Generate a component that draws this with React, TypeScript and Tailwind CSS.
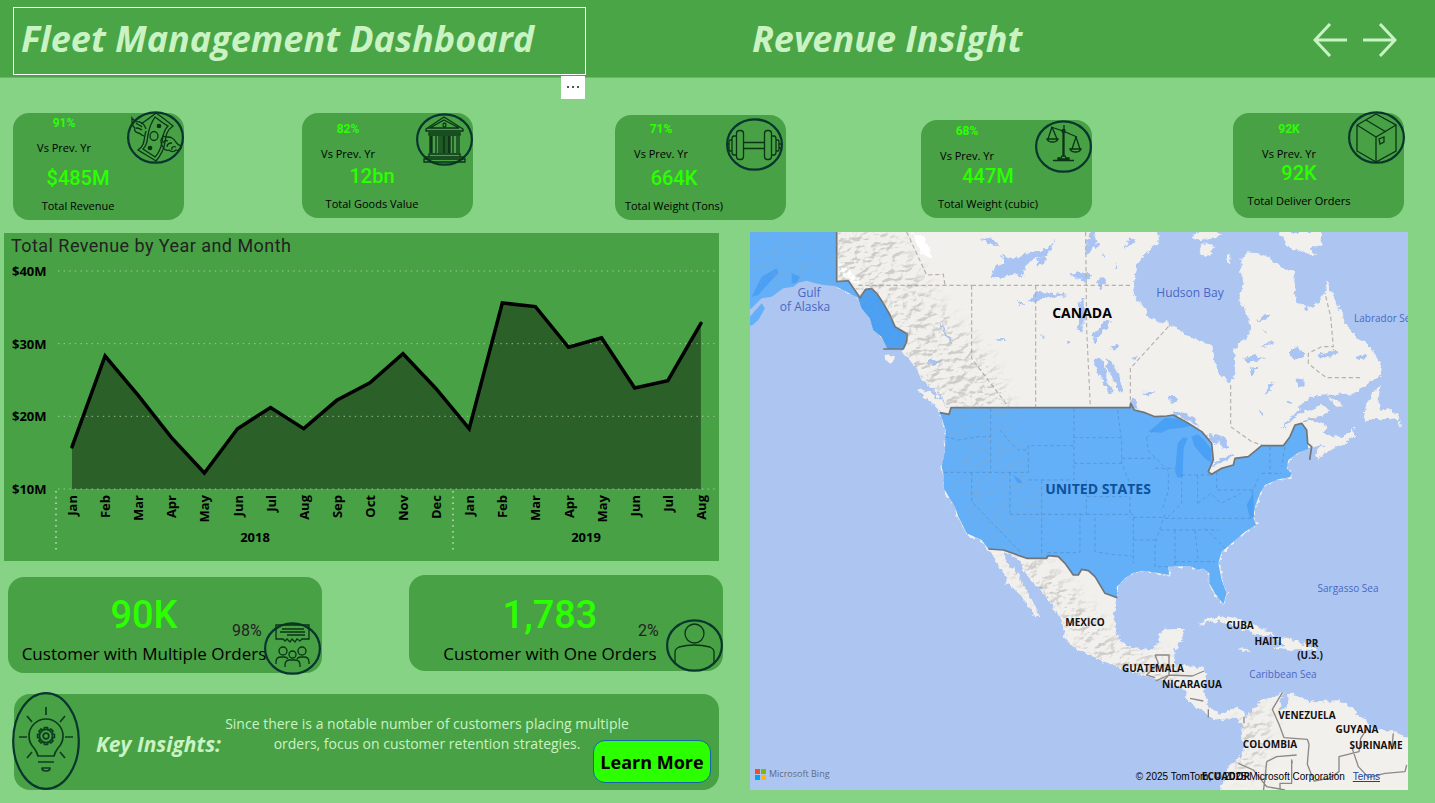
import type { ReactNode } from "react";

/* ---------- icons ---------- */

function MoneyIcon() {
  return (
    <>
      <path d="M14 13C20 9 24 6 29 2c6 4 11 8 17 13-7 5-7 10-8 16-1 8-4 13-9 19C23 46 17 43 11 39c6-4 6-9 7-15 0-2 1-3 1-4" />
      <path d="M28 6c4 3 9 7 13 9-5 5-5 10-6 16-1 6-3 11-7 15-4-3-8-5-12-8 5-5 4-9 5-14 1-7 3-12 7-18z" />
      <ellipse cx="27" cy="25" rx="4" ry="4.500" />
      <circle cx="32" cy="15" r="1.700" fill="#0a3316" />
      <circle cx="23" cy="37" r="1.700" fill="#0a3316" />
      <path d="M17 25c-3-1-4-3-6-3-3-1-4-3-3-5-3-2-3-5-3-10 2 3 5 4 8 4 3 1 5 4 6 7M9 12c2 2 4 2 6 4M9 17c3 0 4 1 6 2" />
      <path d="M36 25c3 2 6 0 9 2 4 2 4 7 9 8 1 3-2 5-5 4-2 2-5 2-7 0-3 1-5-1-6-3-2-2-2-5-2-7zM40 36c0-3 2-4 5-4M45 39c-1-3 1-4 4-3M36 32c1-2 3-3 5-2" />
    </>
  );
}

function BankIcon() {
  return (
    <>
      <path d="M10 16 28 4l19 12v2H10zM14 15 28 7l15 8zM13 20h31v2H13zM13 41h31v3H13zM10 44h37v2H10zM8 46h41v3H8z" />
      <ellipse cx="28.500" cy="12" rx="1.500" ry="2" />
      <path d="M14 23v17M16 23v17M20 23v17M23 23v17M25 23v17M27 23v17M30 23v17M32 23v17M34 23v17M37 23v17M41 23v17M43 23v17" />
      <path d="M15 23v17M28 23v17M33 23v17" strokeWidth="1.800" />
    </>
  );
}

function DumbbellIcon() {
  return (
    <>
      <rect x="10.500" y="12.500" width="7" height="29" rx="3" />
      <rect x="38.500" y="12.500" width="7" height="29" rx="3" />
      <path d="M17 24.500h22M17 30.500h22M10 18H8q-2 0-2 3v13q0 3 2 3h2M46 18h2q2 0 2 3v13q0 3-2 3h-2M6 22H4q-1 0-1 2v7q0 2 1 2h2M50 22h2q1 0 1 2v7q0 2-1 2h-2M3 26H1M3 30H1M53 26h2M53 30h2" />
    </>
  );
}

function ScaleIcon() {
  return (
    <>
      <path d="M29 5v31M28 11v25M16 7l12 4 14 6M23 39h11v-1h-3l-1-2h-3l-1 2h-3zM18 40.500h21" />
      <circle cx="28.500" cy="11" r="1.500" />
      <path d="M17 7l-4 12M17 7l5 12M12 19h11q-1 3-5.500 3T12 19zM41 17l-4 12M41 17l4 12M35 29h11q-1 3-5.500 3T35 29z" />
    </>
  );
}

function BoxIcon() {
  return (
    <>
      <path d="M28 3 9 14v26l19 11 20-11V14zM9 14l19 12 20-12M28 26v25M18 9l20 12" />
      <path d="M31 28l5-2v5l-4 2z" />
    </>
  );
}

function GroupIcon() {
  return (
    <>
      <path d="M12 3h33v14h-7l-2 2-3-2-2 3-3-3-2 3-3-3-2 2-2-2h-7zM18 7h22M16 10h25M23 13h18" />
      <circle cx="19" cy="29" r="4" />
      <circle cx="38" cy="29" r="4" />
      <circle cx="28.500" cy="32.500" r="3.500" />
      <path d="M12 42v-2q0-5 5-5h3q3 0 4 2M45 42v-2q0-5-5-5h-3q-3 0-4 2M21 45v-2q0-5 5-5h5q5 0 5 5v2" />
    </>
  );
}

function PersonIcon() {
  return (
    <>
      <circle cx="28.500" cy="14.500" r="9.500" />
      <path d="M9 44V33q0-3 4-5 15-4 31 0 4 2 4 5v11" />
    </>
  );
}

function RoundIcon({ children, className }: { children: ReactNode; className: string }) {
  return (
    <svg viewBox="0 0 57 53" className={"absolute h-[53px] w-[57px] " + className} fill="none" stroke="#0a3316" strokeWidth="1.300" aria-hidden="true">
      <ellipse cx="28.500" cy="26.500" rx="27.400" ry="25.200" stroke="#08362f" strokeWidth="2.200" />
      {children}
    </svg>
  );
}

function BulbIcon() {
  const teeth = Array.from({ length: 8 }, (_, i) => i * 45);
  return (
    <svg viewBox="0 0 68 98" className="absolute -top-0.5 -left-0.5 h-[98px] w-[68px]" fill="none" stroke="#0d3d20" strokeWidth="1.700" aria-hidden="true">
      <ellipse cx="34" cy="49" rx="32.800" ry="47.800" stroke="#08362f" strokeWidth="2.200" />
      <path d="M26 64q-1-4-4-8-5-5-5-12a17 17 0 0 1 34 0q0 7-5 12-3 4-4 8zM26 70h16M30 76h8q0 3-4 3t-4-3z" strokeLinejoin="round" />
      <path d="M34 15v8M15 24l5 6M53 24l-5 6M7 45h8M53 45h8M20 60l-5 6M48 60l5 6" />
      <circle cx="34" cy="44" r="2.800" />
      <circle cx="34" cy="44" r="6.500" />
      {teeth.map((a) => (
        <path key={a} d="M32 37.500l.5-1.900h3l.5 1.900" transform={`rotate(${a} 34 44)`} />
      ))}
    </svg>
  );
}

/* ---------- KPI cards ---------- */

type Kpi = {
  label: string;
  trend: string;
  value: string;
  card: string;
  trendBox: string;
  valueBox: string;
  iconPlace: string;
  icon: ReactNode;
};

const kpis: Kpi[] = [
  { label: "Total Revenue", trend: "91%", value: "$485M", card: "h-[107px] pt-0.5", trendBox: "w-[102px]", valueBox: "mt-3 w-[130px]", iconPlace: "-top-0.5 right-0", icon: <MoneyIcon /> },
  { label: "Total Goods Value", trend: "82%", value: "12bn", card: "h-[105px] pt-2", trendBox: "w-[92px]", valueBox: "mt-1 w-[140px]", iconPlace: "top-0 right-0", icon: <BankIcon /> },
  { label: "Total Weight (Tons)", trend: "71%", value: "664K", card: "mt-0.5 h-[105px] pt-1.5", trendBox: "w-[92px]", valueBox: "mt-1.5 w-[118px]", iconPlace: "top-[3px] right-[3px]", icon: <DumbbellIcon /> },
  { label: "Total Weight (cubic)", trend: "68%", value: "447M", card: "mt-[7px] h-[98px] pt-[3px]", trendBox: "w-[92px]", valueBox: "mt-0.5 w-[134px]", iconPlace: "top-0 right-0", icon: <ScaleIcon /> },
  { label: "Total Deliver Orders", trend: "92K", value: "92K", card: "h-[105px] pt-2", trendBox: "w-[112px]", valueBox: "mt-px w-[132px]", iconPlace: "-top-0.5 -right-px", icon: <BoxIcon /> },
];

function KpiCard({ kpi }: { kpi: Kpi }) {
  return (
    <article className={"relative flex w-[171px] flex-col rounded-2xl bg-[#48a145] text-center text-[11px] whitespace-nowrap " + kpi.card}>
      <div className={kpi.trendBox}>
        <p className="font-['Roboto'] text-xs leading-4 font-bold text-[#2bff00]">{kpi.trend}</p>
        <p className="mt-[9px] leading-4 text-black">Vs Prev. Yr</p>
      </div>
      <div className={kpi.valueBox}>
        <p className="font-['Roboto'] text-xl leading-5 font-medium text-[#2bff00]">{kpi.value}</p>
        <p className="mt-2.5 flex justify-center leading-4 text-black">{kpi.label}</p>
      </div>
      <RoundIcon className={kpi.iconPlace}>{kpi.icon}</RoundIcon>
    </article>
  );
}

/* ---------- revenue chart ---------- */

const months = ["Jan", "Feb", "Mar", "Apr", "May", "Jun", "Jul", "Aug", "Sep", "Oct", "Nov", "Dec"];
const revenue = [15.8, 28.3, 22.9, 17.1, 12.2, 18.3, 21.2, 18.3, 22.2, 24.6, 28.6, 23.8, 18.3, 35.6, 35.1, 29.5, 30.8, 23.9, 24.9, 32.8];
const ticks = [40, 30, 20, 10];
const px = (i: number) => 68 + i * 33.1;
const py = (v: number) => 230 - (v - 10) * 7.267;

function RevenueChart() {
  const line = revenue.map((v, i) => `${px(i).toFixed(1)},${py(v).toFixed(1)}`).join(" ");
  return (
    <svg viewBox="0 0 715 302" className="block h-auto w-full font-['Open_Sans'] text-[13px] font-bold" role="img" aria-label="Total revenue by year and month">
      <polygon points={`68,230 ${line} ${px(19)},230`} fill="#2b6129" />
      {ticks.map((t) => (
        <g key={t}>
          <line x1="54" x2="711" y1={py(t)} y2={py(t)} stroke="#c9dcc5" strokeOpacity="0.7" strokeDasharray="1.400 4.200" />
          <text x="8" y={py(t) + 5}>{`$${t}M`}</text>
        </g>
      ))}
      <polyline points={line} fill="none" stroke="#000" strokeWidth="3.500" strokeLinecap="round" strokeLinejoin="miter" />
      {revenue.map((_, i) => (
        <text key={i} textAnchor="end" transform={`translate(${px(i) + 5} 236) rotate(-90)`}>
          {months[i % 12]}
        </text>
      ))}
      <path d="M52 232v60M449 232v60" stroke="#c9dcc5" strokeWidth="1.500" strokeDasharray="1.500 4.200" />
      <text x="251" y="283" textAnchor="middle">2018</text>
      <text x="582" y="283" textAnchor="middle">2019</text>
    </svg>
  );
}

/* ---------- map ---------- */

const LAND =
  "M275 0H1238L1240 30 1215 60 1190 80 1175 100 1170 150 1163 190 1175 210 1195 230 1210 265 1240 275 1270 280 1300 300 1340 325 1400 345 1405 370 1408 400 1420 425 1440 455 1455 468 1468 440 1475 400 1465 360 1500 330 1517 300 1515 270 1495 225 1480 210 1495 180 1490 120 1488 85 1510 68 1560 75 1595 100 1620 120 1645 130 1650 185 1655 215 1685 240 1720 220 1738 190 1745 155 1760 190 1780 230 1800 280 1830 320 1872 345 1888 380 1908 405 1908 435 1885 450 1850 475 1820 493 1730 492 1695 500 1670 520 1650 550 1625 575 1600 600 1620 592 1655 560 1690 540 1730 525 1747 540 1735 555 1690 565 1680 575 1720 575 1742 585 1735 605 1760 620 1790 622 1825 596 1830 615 1800 640 1760 655 1720 685 1715 670 1740 642 1700 650 1690 655 1660 668 1630 690 1625 715 1640 735 1635 745 1600 748 1560 765 1545 790 1530 830 1525 860 1533 885 1500 905 1465 935 1430 965 1420 1000 1430 1050 1445 1090 1435 1123 1410 1090 1393 1060 1393 1030 1375 1015 1360 1020 1335 1008 1270 1010 1272 1035 1235 1028 1195 1022 1165 1028 1140 1045 1115 1070 1113 1100 1106 1150 1108 1190 1118 1225 1145 1250 1180 1260 1220 1255 1240 1240 1248 1210 1262 1200 1318 1198 1305 1240 1290 1258 1288 1300 1300 1305 1340 1308 1368 1315 1386 1330 1376 1365 1378 1400 1390 1430 1402 1445 1430 1452 1460 1438 1490 1438 1500 1460 1502 1475 1515 1450 1535 1430 1550 1410 1590 1402 1612 1385 1617 1390 1605 1415 1602 1440 1622 1440 1630 1400 1645 1395 1675 1412 1715 1418 1790 1415 1815 1430 1845 1460 1880 1490 1920 1505 1960 1510 1995 1530V1700H1430L1430 1665 1445 1640 1450 1610 1480 1590 1500 1560 1495 1510 1490 1480 1475 1462 1455 1462 1430 1472 1390 1458 1365 1438 1338 1422 1328 1405 1328 1385 1280 1358 1220 1342 1150 1320 1090 1300 1040 1275 980 1245 958 1222 962 1200 945 1160 920 1120 880 1070 850 1040 820 990 805 975 778 968 780 990 800 1015 818 1030 842 1080 858 1110 875 1135 880 1158 868 1152 850 1130 832 1100 800 1068 780 1058 790 1050 775 1030 750 985 730 957 710 930 665 910 650 880 640 860 630 830 605 790 595 770 597 740 590 710 600 660 602 600 588 550 615 535 600 520 560 472 530 452 520 420 495 390 475 357 415 330 340 205 275 170Z";

const COAST_ISLANDS =
  "M520 478l30 5 30 22 32 30-2 16-28-10-30-28-32-28zM422 375l28-4-2 20-10 12-14-12zM1360 55l25-15 25 8-14 20-24 12zM1445 75l12-4-2 28-10-2zM1340 15l40-10 55 5-30 15-40 8zM1600 6h130l-5 40-30 8 18 24-30-5-50-22zM1908 465l-25 20-30 65 10 20 100-5-5 20 12 12-10-40-25-20-25 5-10-20 2-30zM1745 505l40 10 10 15-15-2zM1360 1185l30-22 50-5 55 12 65 30 30 18-45-3-65-22-55-18-45 5zM1590 1225l50 2 60 25 10 12-45-3-85-5 42-8zM1478 1255l32 2 12 8-32-2zM1680 1255l28-1 2 9-28-1z";

const USA =
  "M585 548L612 553 618 533H1155L1157 520 1168 540 1200 548 1230 560 1265 558 1285 555 1330 580 1370 605 1400 640 1405 690 1390 725 1400 733 1430 715 1465 705 1470 685 1510 680 1550 647H1615L1635 620 1650 585 1670 580 1685 600 1688 640 1690 656 1660 668 1630 690 1625 715 1640 730 1635 742 1600 748 1560 765 1545 790 1530 830 1525 860 1533 885 1500 905 1465 935 1430 965 1420 1000 1430 1050 1445 1090 1435 1123 1410 1090 1393 1060 1393 1030 1375 1015 1360 1020 1335 1008 1270 1010 1272 1035 1235 1028 1195 1022 1165 1028 1140 1045 1115 1070 1117 1103 1080 1090 1050 1040 1030 1022 1010 1018 1000 1035 985 1035 960 1000 940 980 910 977 905 985H845L775 960 730 957 710 930 665 910 650 880 640 860 630 830 605 790 595 770 597 740 590 710 600 660 602 600Z";

const ALASKA =
  "M10 0H275V155L310 152 345 203 362 178 380 176 395 190 415 220 435 255 450 290 487 312 485 335 475 357H428L410 320 385 300 375 265 350 235 340 205 305 185 270 168 235 165 205 158 185 152 160 158 145 170 115 175 80 200 50 205 20 235 10 240ZM10 265L50 220 60 235 40 270 20 287 10 285Z";

const LAKES =
  "M740 120l35-22-8-22 30 10 20-5 35-15 45-5 25-20 10-20-12 35-25 22-32 12-30 30 2 20-20-8-40 8-30 2zM705 25l40 5 20 20-30-8zM875 90l25-12 8 15-30 15zM850 215l25-30 60 5 35 5-45 8-40 2-22 14zM820 215l15 5-10 8zM975 135l30-10 40 8-20 20-25-5zM1025 30l15-12 8 20-15 35-12-12zM1000 215l15-10 5 60-10 40-12-5 8-40zM750 328l20-4 18 6-20 4zM585 280l12 15 25 45-8-3-22-35zM885 310l15 8-3 10zM962 335l14 2-8 8zM1045 330l8-5v18l-6-3zM1030 15l15-9 15 40-8 12zM1070 70l12 5-6 8zM1140 50l15-25 18 8-22 10-8 20zM1110 100l10 8-5 10zM1055 155l20-18 8 10-20 32zM1042 320l35-45 20-5-12 25-35 32zM1095 350l20-10 10 10-18 12zM1155 385l18-5 4 12-18-2zM1045 390l20-5 15 15 5 45 20 45-12 2-25-50-12-20zM1085 385l18 10 18 35 15 55-16-2-15-40-18-20zM1190 485l40 2-20 12zM1272 500l12-8 10 15-10 15-10-6zM1157 505l20 10 5 15-20 8zM1530 275l25-18 20-5-15 20-25 6zM1495 385l25-8 45 8-35 6-25 8zM1545 350l40-16 5 8-32 8zM1515 418l20-5-5 18-12 4zM1640 350l25 8 10 15-10 15-22-5-10-15zM1725 370l45-10 8 12-38 12-20-4zM1655 450l15-8 10 22-18 12zM1565 485l8-20 15-10-15 30-8 10zM1830 385l30-15 8 8-30 16zM1540 545l15-3-2 14zM1625 512l20 4-18 6zM1280 545l30-2 45 25 10 25-30-18-40-18zM1385 612l45 5 25 40-20 0-12-25-10 12-18-15zM1375 605l20 35 12 50-2 15-12-20-2-40zM1405 700l55-30 10 2-30 22-35 10zM1550 300l15 12-8 2zM540 398l25-12 22 6-25 14z";

const US_LAKES =
  "M1210 605l25-20 25-22 40 3 40 22-30 5-40 5-20 10zM1298 640l15-18 15 2-12 30-3 85-15 5-8-20zM1340 620l18-8 20 18 20 28 2 40-22-14-30-36z";

const PROVINCES =
  "M340 166H680M680 166V385L790 530M680 166H1163M872 166V530M1022 6L1025 300 1036 530M1270 290L1156 415V520M1457 465V590L1520 635 1550 645M1845 443H1745L1720 425 1690 400 1690 370 1730 350 1765 350 1757 260 1740 190M485 6L545 135 595 133 600 166M1675 575l35-10";

const STATES =
  "M737 535V727M600 620l40 10 60-10H737M597 727H850V647H985M765 600l25 30 30 30h30M987 535V750M850 750H987M680 727V815L830 970M795 727V850M795 853H1025M890 750V980M1024 750V853M987 700H1130M985 623H1125M1025 800H1145M1118 540l12 100v60l25 60v100M1130 685H1230M1025 853H1165M1165 862H1260M1165 862V1000M1050 863V965l50 8 60 5M1165 930H1240M1260 853L1230 940v70H1270M1205 623l25-25M1205 623l5 40 60 60v60l-20 60M1230 715H1290M1310 735v85l-40 40M1358 735V820M1310 735H1400M1415 725v55H1530M1358 820l40-30 30 30 60-30M1260 865H1520M1245 900H1420M1290 900V1005M1350 900l10 95M1290 995H1410M1380 895l60 60M1575 650v80M1620 650l-10 60M1550 730h60M905 985V968H1005V850M1540 745l-20 45";

const NATIONS =
  "M1230 1275h42v60l-15 15M1230 1275l10 25-35 35 25 8M1272 1335l70 3 35-15M1272 1335l-40 18M1335 1405l40 8M1390 1438v25M1497 1460v20M1612 1388l-30 50 20 45 15 40 70 5 5 15-5 60 20 50 45-8 30-20V1580l60-15 5-40 20-30M1820 1550l20 60 30 32 50-12 60-5 5-20M1945 1510l-5 50M1480 1600l45 20 40 50 55 10M1565 1595l-5 50-5 40M1565 1595l30-15 60-5M1642 1600l-2-10v70h-35v25";

const COUNTRY = "text-[10px] font-bold fill-[#111111]";
const SEA = "text-[10px] fill-[#4a66c4]";

const MAP_TEXT: { t: string; x: number; y: number; c: string }[] = [
  { t: "Gulf", x: 809, y: 297, c: "text-xs fill-[#4a66c4]" },
  { t: "of Alaska", x: 805, y: 311, c: "text-xs fill-[#4a66c4]" },
  { t: "Hudson Bay", x: 1190, y: 297, c: "text-xs fill-[#4a66c4]" },
  { t: "Sargasso Sea", x: 1348, y: 592, c: SEA },
  { t: "Caribbean Sea", x: 1283, y: 678, c: SEA },
  { t: "CANADA", x: 1082, y: 318, c: "text-sm font-bold fill-black" },
  { t: "UNITED STATES", x: 1098, y: 494, c: "text-sm font-bold fill-[#0d529b]" },
  { t: "MEXICO", x: 1085, y: 626, c: COUNTRY },
  { t: "CUBA", x: 1240, y: 629, c: COUNTRY },
  { t: "HAITI", x: 1268, y: 645, c: COUNTRY },
  { t: "PR", x: 1312, y: 647, c: COUNTRY },
  { t: "(U.S.)", x: 1310, y: 659, c: COUNTRY },
  { t: "GUATEMALA", x: 1153, y: 672, c: COUNTRY },
  { t: "NICARAGUA", x: 1192, y: 688, c: COUNTRY },
  { t: "VENEZUELA", x: 1307, y: 719, c: COUNTRY },
  { t: "GUYANA", x: 1357, y: 733, c: COUNTRY },
  { t: "COLOMBIA", x: 1270, y: 748, c: COUNTRY },
  { t: "SURINAME", x: 1376, y: 749, c: COUNTRY },
  { t: "ECUADOR", x: 1226, y: 780, c: COUNTRY },
];

function RevenueMap() {
  return (
    <svg viewBox="750 232 658 558" className="block h-auto w-full bg-[#adc6f1] font-['Open_Sans']" role="img" aria-label="Revenue by country">
      <defs>
        <filter id="coast" filterUnits="userSpaceOnUse" x="0" y="0" width="2000" height="1700">
          <feTurbulence type="fractalNoise" baseFrequency="0.06" numOctaves="3" seed="4" result="n" />
          <feDisplacementMap in="SourceGraphic" in2="n" scale="22" xChannelSelector="R" yChannelSelector="G" />
        </filter>
        <filter id="relief" filterUnits="userSpaceOnUse" x="750" y="232" width="658" height="558">
          <feTurbulence type="fractalNoise" baseFrequency="0.09 0.15" numOctaves="4" seed="9" />
          <feColorMatrix values="0 0 0 0 0  0 0 0 0 0  0 0 0 0 0  1 0 0 0 0" />
          <feDiffuseLighting surfaceScale="5" lightingColor="#ffffff">
            <feDistantLight azimuth="225" elevation="55" />
          </feDiffuseLighting>
          <feColorMatrix values="0 0 0 0 0.35  0 0 0 0 0.35  0 0 0 0 0.33  -2.2 0 0 0 1.7" />
        </filter>
        <filter id="soft">
          <feGaussianBlur stdDeviation="22" />
        </filter>
        <clipPath id="landClip">
          <path d={LAND} transform="translate(745 230) scale(.33333)" />
          <path d={ALASKA} transform="translate(745 230) scale(.33333)" />
        </clipPath>
        <mask id="mountains" maskUnits="userSpaceOnUse" x="750" y="232" width="658" height="558">
          <g transform="translate(745 230) scale(.33333)">
            <g fill="none" stroke="#fff" filter="url(#soft)" strokeLinejoin="round">
              <path d="M0 60L360 60 480 270 640 440 720 620 760 800 860 900" strokeWidth="220" />
              <path d="M820 980L960 1120 1080 1270 1300 1340M1540 1440L1490 1640" strokeWidth="100" />
            </g>
            <path d={USA} fill="#000" fillOpacity="0.65" />
            <path d={ALASKA} fill="#000" fillOpacity="0.65" />
          </g>
        </mask>
      </defs>

      <g transform="translate(745 230) scale(.33333)">
        <g filter="url(#coast)">
          <path d={LAND} fill="#f2f0ed" stroke="#f2f0ed" strokeWidth="3" />
          <path d={COAST_ISLANDS} fill="#f2f0ed" />
          <path d={LAKES} fill="#a9c4f2" />
          <path d="M280 100l30 10 35 45-20 5-40-25zM500 10l40 10 20 60-25 0z" fill="#fff" />
        </g>
        <path d={ALASKA} fill="#64b0f8" />
        <path d="M20 200l30-60 45-25 5 15-25 25-35 40zM140 130l25 10-10 20-15 0zM340 205l22-27 18-2 35 44 35 70 37 22-2 23-10 22h-47l-18-37-25-20-10-35-25-30z" fill="#4aa0f4" />
        <path d={USA} fill="#64b0f8" />
        <path d={US_LAKES} fill="#4aa0f4" />
        <path d="M1525 785l-20 40 10 40 12-5zM805 735l22 15 5 10-15-2z" fill="#4aa0f4" />
        <path d={PROVINCES} fill="none" stroke="#b5b1ab" strokeWidth="3.500" strokeDasharray="13 8" />
        <path d={STATES} fill="none" stroke="#4d8cc6" strokeWidth="3" strokeDasharray="11 8" strokeOpacity="0.65" />
        <path d={NATIONS} fill="none" stroke="#8b8885" strokeWidth="4" strokeLinejoin="round" />
        <path
          d="M275 0V155L310 152 345 203 362 178 380 176 395 190 415 220 435 255 450 290 487 312 485 335 475 357H415M585 548L612 553 618 533H1155L1157 520 1168 540 1200 548 1230 560 1265 558 1285 555 1330 580 1370 605 1400 640 1405 690 1390 725 1400 733 1430 715 1465 705 1470 685 1510 680 1550 647H1615L1635 620 1650 585 1670 580 1685 600 1688 640 1700 650 1694 690M1117 1103L1080 1090 1050 1040 1030 1022 1010 1018 1000 1035 985 1035 960 1000 940 980 910 977 905 985H845L775 960 730 957"
          fill="none"
          stroke="#6f7478"
          strokeWidth="5"
          strokeLinejoin="round"
        />
      </g>

      <g clipPath="url(#landClip)">
        <g mask="url(#mountains)">
          <rect x="750" y="232" width="658" height="558" filter="url(#relief)" opacity="0.45" />
        </g>
      </g>

      {MAP_TEXT.map((m) => (
        <text key={m.t} x={m.x} y={m.y} textAnchor="middle" className={m.c}>
          {m.t}
        </text>
      ))}
      <text x="1354" y="322" className={SEA}>
        Labrador Sea
      </text>
    </svg>
  );
}

function MapPanel() {
  return (
    <section className="relative min-w-0 flex-[658] self-start overflow-hidden" aria-label="Revenue map">
      <RevenueMap />
      <div className="absolute bottom-2.5 left-[5px] flex items-center gap-[3px]">
        <svg viewBox="0 0 11 11" className="h-[11px] w-[11px]" aria-hidden="true">
          <path fill="#f25022" d="M0 0h5v5H0z" />
          <path fill="#7fba00" d="M6 0h5v5H6z" />
          <path fill="#00a4ef" d="M0 6h5v5H0z" />
          <path fill="#ffb900" d="M6 6h5v5H6z" />
        </svg>
        <span className="font-['Open_Sans'] text-[9px] leading-3 text-[#5f6b80]">Microsoft Bing</span>
      </div>
      <div className="absolute right-7 bottom-[5px] flex gap-2 font-['Liberation_Sans'] text-[10px] leading-4 whitespace-nowrap text-black">
        <span>© 2025 TomTom, © 2025 Microsoft Corporation</span>
        <a href="#terms" className="text-[#1b3fa0] underline">
          Terms
        </a>
      </div>
    </section>
  );
}

/* ---------- customer cards ---------- */

type CustomerCardProps = {
  value: string;
  share: string;
  label: string;
  body: string;
  cardClass: string;
  shareClass: string;
  children: ReactNode;
};

function CustomerCard({ value, share, label, body, cardClass, shareClass, children }: CustomerCardProps) {
  return (
    <article className={"relative h-24 w-[314px] rounded-2xl bg-[#48a145] " + cardClass}>
      <div className={"flex flex-col items-center whitespace-nowrap " + body}>
        <p className="font-['Roboto'] text-[38px] leading-10 font-medium text-[#2bff00]">{value}</p>
        <p className="mt-[7px] text-[17px] leading-6 text-black">{label}</p>
      </div>
      <p className={"absolute font-['Roboto'] text-base leading-5 text-[#222222] " + shareClass}>{share}</p>
      {children}
    </article>
  );
}

/* ---------- page ---------- */

export default function App() {
  return (
    <div className="flex min-h-screen flex-col bg-[#87d385] font-['Open_Sans',sans-serif]">
      <header className="flex h-[78px] items-center border-b border-[#68b965] bg-[#4aa546] pt-1 text-[#caf3c3]">
        <div className="w-[52.400%] pl-[13px]">
          <div className="relative flex h-[68px] w-[573px] items-center border border-white pb-1 pl-[7px]">
            <h1 className="text-4xl leading-10 font-bold whitespace-nowrap italic">Fleet Management Dashboard</h1>
            <button type="button" aria-label="More options" className="absolute top-[68px] right-0 flex h-[23px] w-6 items-center justify-center gap-[3px] bg-white">
              <span className="size-0.5 bg-[#555555]" />
              <span className="size-0.5 bg-[#555555]" />
              <span className="size-0.5 bg-[#555555]" />
            </button>
          </div>
        </div>
        <h2 className="pb-1 text-4xl leading-10 font-bold whitespace-nowrap italic">Revenue Insight</h2>
        <nav className="mr-[38px] ml-auto flex gap-4 pb-0.5" aria-label="Pages">
          <button type="button" aria-label="Previous page">
            <svg viewBox="0 0 34 34" className="size-[34px]" fill="none" stroke="currentColor" strokeWidth="3">
              <path d="M34 17H2M17 1 2 17l15 16" />
            </svg>
          </button>
          <button type="button" aria-label="Next page">
            <svg viewBox="0 0 34 34" className="size-[34px]" fill="none" stroke="currentColor" strokeWidth="3">
              <path d="M0 17h32M17 1l15 16-15 16" />
            </svg>
          </button>
        </nav>
      </header>

      <main className="flex flex-1 flex-col">
        <section className="grid h-[154px] grid-cols-[289fr_313fr_306fr_312fr_202fr] items-start pt-[35px] pl-[13px]" aria-label="Key figures">
          {kpis.map((k) => (
            <KpiCard key={k.label} kpi={k} />
          ))}
        </section>

        <div className="flex items-start gap-[27px] pr-[27px] pb-3 pl-1">
          <div className="min-w-0 flex-[719]">
            <section className="mt-px mr-1 bg-[#48a145]">
              <h3 className="h-[26px] pl-[7px] font-['Roboto'] text-lg leading-[26px] tracking-wide text-[#222222]">Total Revenue by Year and Month</h3>
              <RevenueChart />
            </section>

            <section className="mt-3.5 flex items-start justify-between pl-1" aria-label="Customers">
              <CustomerCard value="90K" share="98%" label="Customer with Multiple Orders" body="pt-[18px] w-[272px]" cardClass="mt-0.5" shareClass="top-11 left-56">
                <RoundIcon className="right-px -bottom-0.5">
                  <GroupIcon />
                </RoundIcon>
              </CustomerCard>
              <CustomerCard value="1,783" share="2%" label="Customer with One Orders" body="pt-5 w-[282px]" cardClass="" shareClass="top-[46px] left-[229px]">
                <RoundIcon className="right-0 -bottom-px">
                  <PersonIcon />
                </RoundIcon>
              </CustomerCard>
            </section>

            <section className="relative mt-[21px] mr-1 ml-2.5 flex h-24 items-start rounded-2xl bg-[#48a145] text-[#caf3c3]">
              <BulbIcon />
              <h3 className="mt-9 w-[125px] ml-[82px] text-[21px] leading-7 font-bold whitespace-nowrap italic">Key Insights:</h3>
              <p className="mt-5 w-[412px] shrink-0 text-center text-sm leading-5">
                Since there is a notable number of customers placing multiple orders, focus on customer retention strategies.
              </p>
              <button type="button" className="absolute right-2 bottom-[7px] h-[43px] w-[118px] rounded-xl border border-[#1466a8] bg-[#2bff00] text-lg font-bold whitespace-nowrap text-black">
                Learn More
              </button>
            </section>
          </div>
          <MapPanel />
        </div>
      </main>
    </div>
  );
}
